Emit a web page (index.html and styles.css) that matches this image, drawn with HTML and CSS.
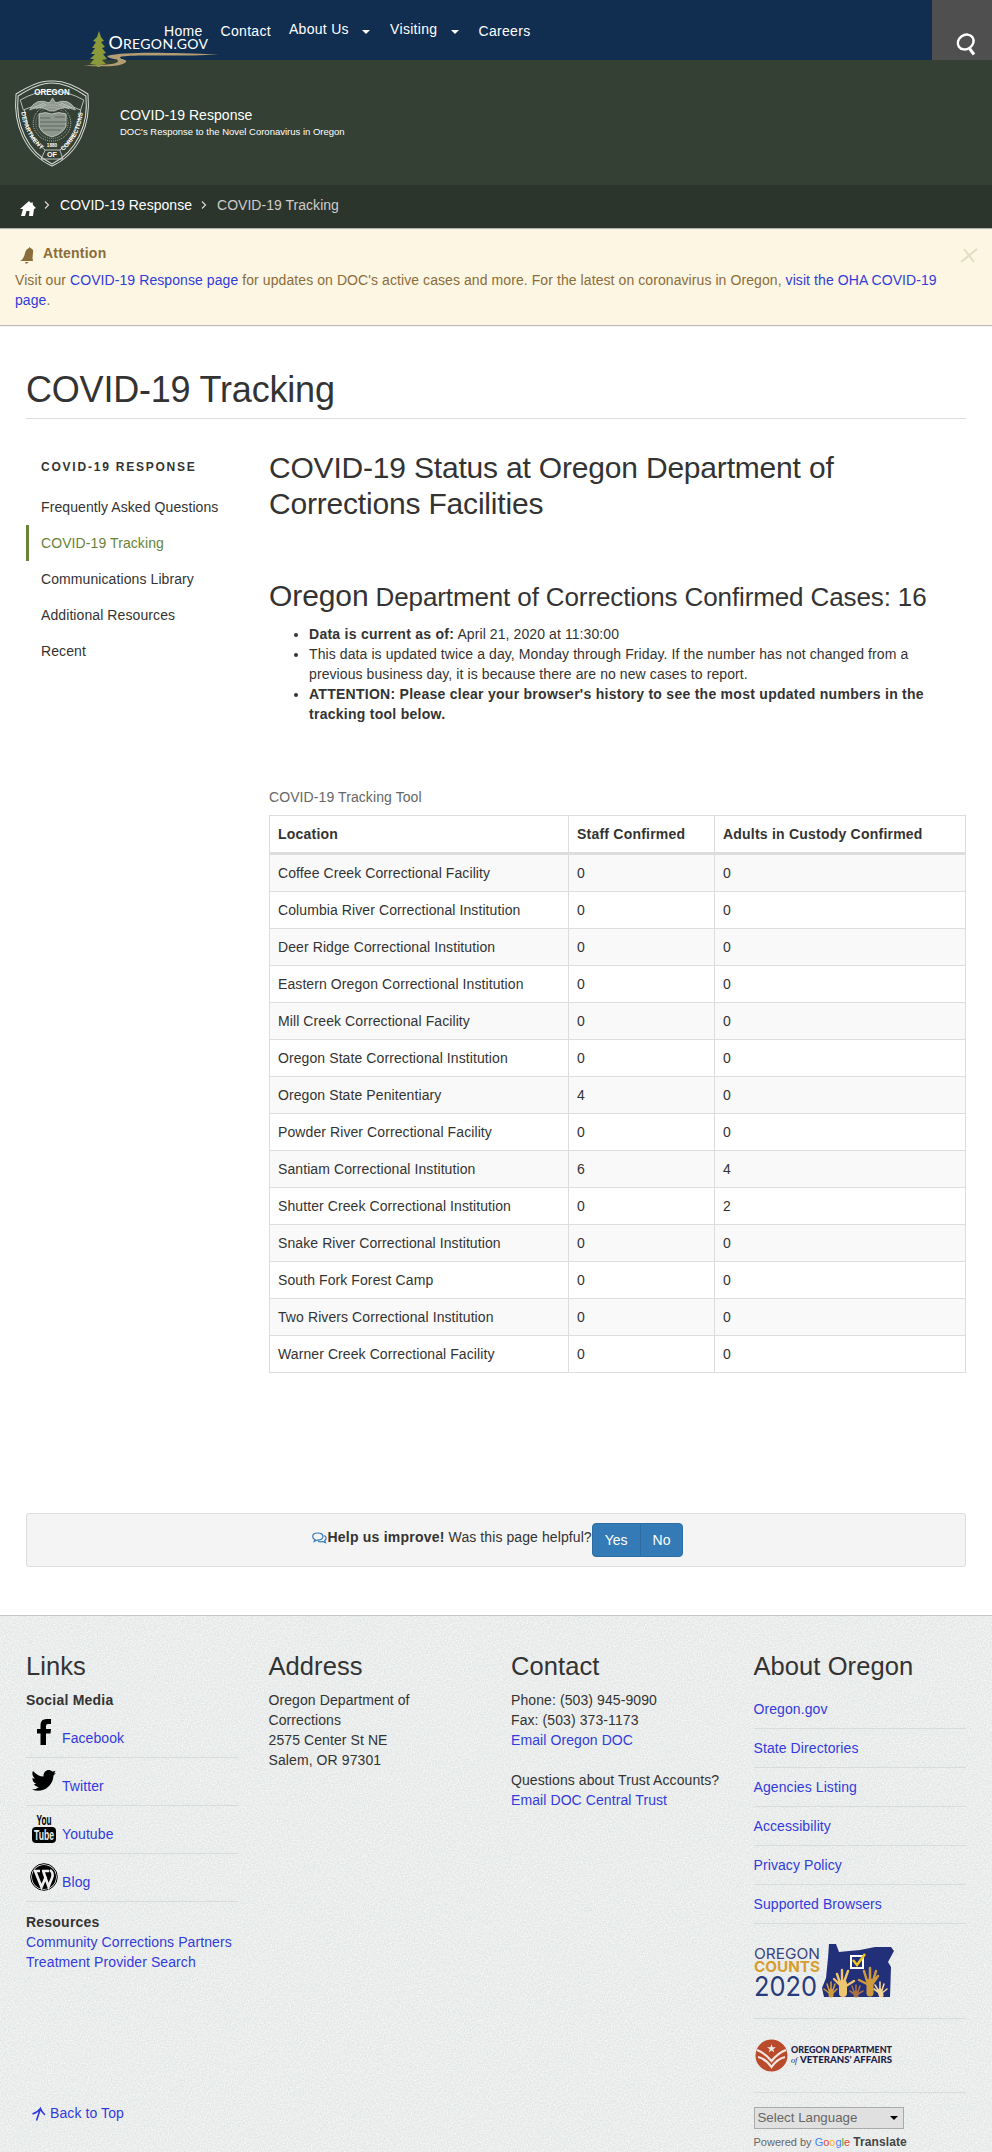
FILE: index.html
```
<!DOCTYPE html>
<html lang="en">
<head>
<meta charset="utf-8">
<title>COVID-19 Tracking</title>
<link rel="stylesheet" href="styles.css">
</head>
<body>
<header class="topbar">
  <svg class="gov-logo" width="138" height="38" viewBox="0 0 138 38">
    <path d="M25 25C45 20 90 22 137 23.500C90 26 50 23 38 26C38 29 46 28 44 31C40 36 20 36 0 34.500C18 34 36 34 36 30C36 27 28 29 25 25Z" fill="#b39d72"/>
    <path d="M17 0L19 6L22 10L19 11L23 16L20 17L24 22L21 23L25 28L20 29L24 33L18 34V36H15V34L8 33L12 28L8 28L13 23L9 23L13 17L10 17L14 11L11 10L15 6Z" fill="#8a9a3b"/>
    <text x="26.500" y="18" class="gov-name" font-size="18">O</text><text x="41" y="18" class="gov-name" font-size="14" textLength="85">REGON.GOV</text>
  </svg>
  <nav class="menu">
    <a>Home</a><a>Contact</a><a class="drop">About Us <i class="caret"></i></a><a class="drop">Visiting <i class="caret"></i></a><a>Careers</a>
  </nav>
  <div class="search"><svg width="20" height="24" viewBox="0 0 20 24" fill="none" stroke="#fff"><ellipse cx="9.700" cy="9" rx="8.300" ry="7" transform="rotate(-35 9.700 9)" stroke-width="2.400"/><path d="M13.500 15.500L18 21.500" stroke-width="3"/></svg></div>
</header>
<section class="agency">
  <svg class="badge" width="74" height="87" viewBox="0 0 71 87" preserveAspectRatio="none" fill="none" stroke="#d5d9d5">
    <path d="M1 14Q22 0 35.500 1Q50 0 70 14C73 45 61 74 35.500 86C10 74-2 45 1 14Z"/>
    <path d="M3 16Q22 3 35.500 3Q50 3 68 16C71 44 59 72 35.500 84C12 72 0 44 3 16Z"/>
    <path d="M5 20Q35 2 66 20L63 30Q36 15 8 30ZM9 30C12 51 18 62 29 70H43C54 62 60 51 63 30M29 70L25 79H46L43 70" stroke-width=".8"/>
    <path d="M14 30Q20 17 33 23L36 18L39 23Q52 17 58 30Q47 25 38 31H33Q25 25 14 30Z" fill="#8d978d" stroke-width=".6"/>
    <path d="M17 28L28 23M20 29L30 24M55 28L44 23M52 29L42 24" stroke-width=".7"/>
    <circle cx="35.500" cy="43" r="18" stroke-width=".8" stroke-dasharray="1 1"/>
    <circle cx="35.500" cy="43" r="15.500" stroke-width=".6" stroke-dasharray="1 1"/>
    <path d="M23 34Q29 31 35 34Q42 31 49 34V46Q46 54 35.500 57Q25 54 23 46Z" fill="#8d978d" stroke-width=".7"/>
    <path d="M24 38H34M38 37H48M24 42H49M24 46H48M27 50H44" stroke="#556155" stroke-width=".8"/>
    <g fill="#fff" stroke="none" font-family="Liberation Sans, sans-serif" font-weight="bold" text-anchor="middle">
      <text x="35.500" y="15.500" font-size="9.500" textLength="34" lengthAdjust="spacingAndGlyphs">OREGON</text>
      <text x="35.500" y="77" font-size="7">OF</text>
      <text x="35.500" y="67" font-size="4.500">1880</text>
    </g>
    <path id="arcL" d="M6 32C8 50 17 64 27 71" stroke="none"/><path id="arcR" d="M46 71C57 62 64 48 65 31" stroke="none"/>
    <g fill="#fff" stroke="none" font-family="Liberation Sans, sans-serif" font-weight="bold" font-size="6"><text textLength="43"><textPath href="#arcL">DEPARTMENT</textPath></text><text textLength="44"><textPath href="#arcR">CORRECTIONS</textPath></text></g>
  </svg>
  <div class="agency-text"><div class="agency-title">COVID-19 Response</div><div class="agency-sub">DOC's Response to the Novel Coronavirus in Oregon</div></div>
</section>
<nav class="crumbs">
  <svg class="house" width="16" height="15" viewBox="0 0 16 15" fill="#fff"><path d="M0 8L9 0L11 2L12.500 1L13 4L16 7L14 8L13 15H9L9.500 10H6.500L5 15H1L3 8Z"/></svg>
  <svg class="chev" width="6" height="8" viewBox="0 0 6 8" fill="none" stroke="#d6d9d6" stroke-width="1.200"><path d="M1 .5L4.500 4L1 7.500"/></svg>
  <a class="crumb1">COVID-19 Response</a>
  <svg class="chev" width="6" height="8" viewBox="0 0 6 8" fill="none" stroke="#d6d9d6" stroke-width="1.200"><path d="M1 .5L4.500 4L1 7.500"/></svg>
  <span class="crumb2">COVID-19 Tracking</span>
</nav>
<section class="alert">
  <div class="alert-head"><svg width="15" height="17" viewBox="0 0 15 17" fill="#8a6d3b"><path d="M9 0L10.500 1Q14 2 13 6L12.500 11L13 14H0Q4 12 5 6Q6 2 9 1ZM5 15H9L6 17Z"/></svg><strong>Attention</strong>
  <svg class="close" width="18" height="15" viewBox="0 0 18 15" fill="none" stroke="#e5dcc3" stroke-width="2"><path d="M4 1L14 14M17 1L1 14"/></svg></div>
  <p>Visit our <a>COVID-19 Response page</a> for updates on DOC's active cases and more. For the latest on coronavirus in Oregon, <a>visit the OHA COVID-19 page</a>.</p>
</section>
<main class="wrap">
  <h1>COVID-19 Tracking</h1>
  <div class="cols">
    <aside class="side"><h2 class="side-title">COVID-19 RESPONSE</h2><a>Frequently Asked Questions</a><a class="active">COVID-19 Tracking</a><a>Communications Library</a><a>Additional Resources</a><a>Recent</a></aside>
    <article class="content">
      <h2>COVID-19 Status at Oregon Department of Corrections Facilities</h2>
      <h3><span class="big">Oregon</span> Department of Corrections Confirmed Cases: 16</h3>
      <ul><li><strong>Data is current as of:</strong> April 21, 2020 at 11:30:00</li><li>This data is updated twice a day, Monday through Friday. If the number has not changed from a previous business day, it is because there are no new cases to report.</li><li><strong>ATTENTION: Please clear your browser's history to see the most updated numbers in the tracking tool below.</strong></li></ul>
      <table>
        <caption>COVID-19 Tracking Tool</caption>
        <colgroup><col class="c1"><col class="c2"><col></colgroup>
        <thead><tr><th>Location</th><th>Staff Confirmed</th><th>Adults in Custody Confirmed</th></tr></thead>
        <tbody>
          <tr><td>Coffee Creek Correctional Facility</td><td>0</td><td>0</td></tr>
          <tr><td>Columbia River Correctional Institution</td><td>0</td><td>0</td></tr>
          <tr><td>Deer Ridge Correctional Institution</td><td>0</td><td>0</td></tr>
          <tr><td>Eastern Oregon Correctional Institution</td><td>0</td><td>0</td></tr>
          <tr><td>Mill Creek Correctional Facility</td><td>0</td><td>0</td></tr>
          <tr><td>Oregon State Correctional Institution</td><td>0</td><td>0</td></tr>
          <tr><td>Oregon State Penitentiary</td><td>4</td><td>0</td></tr>
          <tr><td>Powder River Correctional Facility</td><td>0</td><td>0</td></tr>
          <tr><td>Santiam Correctional Institution</td><td>6</td><td>4</td></tr>
          <tr><td>Shutter Creek Correctional Institution</td><td>0</td><td>2</td></tr>
          <tr><td>Snake River Correctional Institution</td><td>0</td><td>0</td></tr>
          <tr><td>South Fork Forest Camp</td><td>0</td><td>0</td></tr>
          <tr><td>Two Rivers Correctional Institution</td><td>0</td><td>0</td></tr>
          <tr><td>Warner Creek Correctional Facility</td><td>0</td><td>0</td></tr>
        </tbody>
      </table>
    </article>
  </div>
  <div class="helpful">
    <svg width="15" height="13" viewBox="0 0 15 13" fill="none" stroke="#337ab7" stroke-width="1.200"><path d="M5.800 1C2.500 1 .7 2.500 .7 4.500C.7 6 1.700 7 3 7.500L2.200 9.500L5 8C8.500 8.300 11 6.800 11 4.500C11 2.500 9 1 5.800 1Z"/><path d="M12.300 3.500C14.600 4.800 14.800 7 12.700 8.500L13.500 10.700L10.500 9.500C9 10 7.500 9.900 6 9.200"/></svg>
    <span class="ask"><strong>Help us improve!</strong> Was this page helpful?</span><span class="btns"><button>Yes</button><button>No</button></span>
  </div>
</main>
<footer class="footer">
  <svg class="grain" width="100%" height="100%"><filter id="noise" x="0" y="0" width="100%" height="100%"><feTurbulence type="fractalNoise" baseFrequency=".7" numOctaves="2"/><feColorMatrix values="0 0 0 0 1  0 0 0 0 1  0 0 0 0 1  1.200 0 0 0 -.3"/></filter><rect width="100%" height="100%" filter="url(#noise)"/></svg>
  <div class="foot-cols">
    <section>
      <h2>Links</h2><strong class="sub">Social Media</strong>
      <div class="soc"><svg width="36" height="30" viewBox="0 0 36 30"><path d="M25 0V5H22Q20 5 20 7V10H25L24.500 14.500H20V26H14.500V14.500H11V10H14.500V6Q14.500 0 20.500 0Z"/></svg><a>Facebook</a></div>
      <div class="soc"><svg width="36" height="30" viewBox="0 0 36 30"><path d="M30 6L27.500 8.500C27 19 17 27 6 22.500Q10 22.500 13 20Q9 19.500 8 17H10.500Q6 15 6.500 11L9 12Q5 8 7 4Q12 9.500 17.500 9.500C17 3.500 23 1 26.500 4.500L29.500 4L28 6.500Z"/></svg><a>Twitter</a></div>
      <div class="soc"><svg width="36" height="30" viewBox="0 0 36 30"><g font-family="Liberation Sans, sans-serif" font-weight="bold"><text x="10.500" y="9.500" font-size="14" textLength="15" lengthAdjust="spacingAndGlyphs">You</text><rect x="6" y="12" width="24" height="16" rx="4"/><text x="8" y="25" fill="#eee" font-size="14" textLength="20" lengthAdjust="spacingAndGlyphs">Tube</text></g></svg><a>Youtube</a></div>
      <div class="soc"><svg width="36" height="30" viewBox="0 0 36 30"><circle cx="18" cy="14" r="13.300" fill="#eee" stroke="#000"/><circle cx="18" cy="14" r="12"/><path d="M8 8H14M16 8H23M9.500 9L15.500 24L20 13.500M17.500 9L22.500 23.500L26 15Q28 10 24 7" fill="none" stroke="#eee" stroke-width="2.600"/></svg><a>Blog</a></div>
      <div class="res"><strong>Resources</strong><br><a>Community Corrections Partners</a><br><a>Treatment Provider Search</a></div>
    </section>
    <section><h2>Address</h2><p>Oregon Department of Corrections<br>2575 Center St NE<br>Salem, OR 97301</p></section>
    <section><h2>Contact</h2><p>Phone: (503) 945-9090<br>Fax: (503) 373-1173<br><a>Email Oregon DOC</a></p><p class="trust">Questions about Trust Accounts?<br><a>Email DOC Central Trust</a></p></section>
    <section class="about">
      <h2>About Oregon</h2>
      <a>Oregon.gov</a><a>State Directories</a><a>Agencies Listing</a><a>Accessibility</a><a>Privacy Policy</a><a>Supported Browsers</a>
      <div class="counts"><svg width="142" height="56" viewBox="0 0 142 56">
        <g font-family="Inter, sans-serif"><text x="0" y="16" font-size="15" fill="#3a4580" textLength="66" lengthAdjust="spacingAndGlyphs">OREGON</text><text x="0" y="29" font-size="14.500" font-weight="bold" fill="#d69e2e" textLength="66" lengthAdjust="spacingAndGlyphs">COUNTS</text><text x="0" y="53" font-size="27" fill="#283b7c" textLength="63" lengthAdjust="spacingAndGlyphs">2020</text></g>
        <path d="M75 1L82 1L85 9L95 8L106 7L121 4L137 4L140 8L134 19L137 24L136 54H70L68 45L72 35L74 15Z" fill="#22307a"/>
        <path d="M97 13H109V25H97Z" fill="none" stroke="#fff" stroke-width="2"/><path d="M99 17L103 22L111 11" fill="none" stroke="#f2c51c" stroke-width="2.500"/>
        <g stroke-linecap="round" fill="none">
          <g stroke="#edc66f"><path d="M89 50V41" stroke-width="8"/><path d="M86 40L83 31M88 39L88 27M90 39L94 28M92 43L100 38M86 42L80 36" stroke-width="2.400"/></g>
          <g stroke="#cf9a3d"><path d="M116 50V39" stroke-width="7"/><path d="M113 38L110 28M116 37L116 25M119 38L122 28M113 41L105 37M119 40L124 33" stroke-width="2.500"/><path d="M77 52V48" stroke-width="5"/><path d="M75 47L73 41M77 46L77 39M79 47L81 41M75 50L70 46M79 50L83 46" stroke-width="1.600"/></g>
          <g stroke="#a87047"><path d="M102 52V50" stroke-width="5"/><path d="M100 49L98 43M102 48V42M104 49L106 43M100 51L96 48M104 51L109 48" stroke-width="1.600"/></g>
          <g stroke="#f3d596"><path d="M127 52L126 48" stroke-width="5"/><path d="M124 47L121 42M126 46V39M128 47L130 41M124 49L120 46M128 50L133 46" stroke-width="1.600"/></g>
        </g></svg></div>
      <div class="vets"><svg width="142" height="34" viewBox="0 0 142 34"><circle cx="17.500" cy="16.500" r="16" fill="#b94a2c"/><g fill="none" stroke="#f0e8e2" stroke-width="2.200"><path d="M3 11Q11 14 17.500 22Q24 14 32 11M4 18Q12 20 17.500 28Q23 20 31 18"/></g><path d="M17.500 5L18.600 8.300H22L19.300 10.300L20.300 13.500L17.500 11.500L14.700 13.500L15.700 10.300L13 8.300H16.400Z" fill="#f0e8e2"/><g font-family="Lato, sans-serif" font-weight="900" fill="#1b1c49" font-size="8.500"><text x="37" y="13.500" textLength="101" lengthAdjust="spacingAndGlyphs">OREGON DEPARTMENT</text><text x="37" y="24" font-family="Liberation Serif, serif" font-style="italic" font-weight="normal" font-size="8">of</text><text x="46" y="24" textLength="92" lengthAdjust="spacingAndGlyphs">VETERANS’ AFFAIRS</text></g></svg></div>
      <div class="lang"><div class="select">Select Language<i class="caret"></i></div><div class="powered">Powered by <span class="google"><b class="gb">G</b><b class="gr">o</b><b class="gy">o</b><b class="gb">g</b><b class="gg">l</b><b class="gr">e</b></span> <strong>Translate</strong></div></div>
    </section>
  </div>
  <a class="back"><svg width="14" height="14" viewBox="0 0 14 14" fill="none" stroke="#323bdc" stroke-width="1.600"><path d="M4.500 13.500L8.500 1.500M.5 7Q6 5 8.500 1.500Q9.500 5 13 8"/></svg>Back to Top</a>
</footer>
</body>
</html>
```
FILE: styles.css
```
* { box-sizing: border-box; }
body { margin: 0; font: 14px/20px "Liberation Sans", Arial, sans-serif; letter-spacing: .09px; color: #333; background: #fff; }
h1, h2, h3, p, ul { margin: 0; font-weight: normal; }
a { color: #323bdc; text-decoration: none; }
strong, th { letter-spacing: .22px; }
svg { overflow: visible; letter-spacing: 0; flex: none; }
.topbar { height: 60px; background: #112e51; display: flex; justify-content: space-between; position: relative; }
.gov-logo { position: absolute; left: 82px; top: 31px; }
.gov-name { fill: #fff; font-family: Lato, sans-serif; }
.menu { display: flex; padding: 21px 0 0 164px; position: relative; letter-spacing: .3px; }
.menu a { color: #fff; margin-right: 18px; white-space: nowrap; }
.menu .drop { margin-top: -2px; margin-right: 20px; }
.caret { display: inline-block; border: 4px solid transparent; border-top-color: currentColor; border-bottom: 0; margin-left: 9px; }
.search { width: 60px; background: #4f4f4f; padding: 33px 0 0 24px; }
.agency { background: #334033; height: 125px; display: flex; padding: 20px 14px 0 15px; }
.agency-text { margin: 26px 0 0 31px; color: #fff; letter-spacing: 0; }
.agency-title { line-height: 18px; letter-spacing: .05px; }
.agency-sub { font-size: 9.500px; line-height: 16px; }
.crumbs { background: #2c352b; height: 43px; padding-left: 20px; display: flex; align-items: flex-start; color: #fff; letter-spacing: .03px; }
.house { margin: 16px 8px 0 0; }
.chev { margin-top: 16px; }
.crumbs a, .crumbs span { margin: 10px 9px 0 10px; color: #fff; }
.crumbs .crumb2 { color: #ccc; }
.alert { background: #fcf6e2; height: 97px; padding: 15px 14px 0 15px; color: #8a6d3b; box-shadow: 0 1px 1px #bbb, inset 0 2px 1px -1px #aaa; }
.alert-head { display: flex; padding-left: 5px; height: 27px; }
.alert-head svg { margin: 4px 8px 0 0; }
.alert-head .close { margin: 5px 0 0 auto; }
.alert p { width: 940px; letter-spacing: .08px; }
.wrap { padding: 0 26px; height: 1290px; }
h1 { font-size: 36px; line-height: 40px; padding: 45px 0 8px; border-bottom: 1px solid #ddd; letter-spacing: -.2px; }
.cols { display: grid; grid-template-columns: 243px 1fr; }
.side { padding-top: 38px; }
.side a { display: block; color: #333; line-height: 20px; padding: 8px 12px; border-left: 3px solid transparent; }
.side .active { color: #67833a; border-color: #67833a; }
.side-title { font-size: 12px; font-weight: bold; letter-spacing: 1.780px; padding-left: 15px; margin-bottom: 12px; }
.content h2 { font-size: 30px; line-height: 36px; margin-top: 31px; letter-spacing: -.19px; }
.content h3 { font-size: 26px; line-height: 36px; margin-top: 56px; letter-spacing: -.12px; }
.content h3 .big { font-size: 30px; letter-spacing: -.1px; }
.content ul { padding: 0 38px 0 40px; margin-top: 9px; }
.content ul strong { letter-spacing: .27px; }
table { border-collapse: collapse; width: 697px; margin-top: 61px; table-layout: fixed; }
caption { text-align: left; color: #666; padding: 2px 0 8px; }
.c1 { width: 299px; } .c2 { width: 146px; }
th, td { border: 1px solid #ddd; padding: 8px; line-height: 20px; text-align: left; }
th { border-bottom-width: 3px; }
tbody tr:nth-child(odd) { background: #f9f9f9; }
.helpful { margin-top: 140px; height: 54px; background: #f4f4f4; border: 1px solid #ddd; border-radius: 3px; display: flex; justify-content: center; padding: 9px 0 9px 3px; }
.helpful svg { margin: 9px 1px 0 0; }
.ask { margin-top: 4px; }
.btns button { font: inherit; background: #337ab7; color: #fff; border: 1px solid #2e6da4; padding: 6px 12px; height: 34px; border-radius: 0 4px 4px 0; }
.btns button:first-child { border-radius: 4px 0 0 4px; margin-right: -1px; }
.footer { background: #e2e5e5; height: 537px; position: relative; border-top: 1px solid #c4c6c6; overflow: hidden; }
.grain { position: absolute; inset: 0; }
.foot-cols { display: grid; grid-template-columns: repeat(4, 212px); column-gap: 30.500px; padding: 33px 26px 0; position: relative; height: 483px; }
.foot-cols h2 { font-size: 25.500px; line-height: 34px; margin-bottom: 7px; letter-spacing: .08px; }
.sub { display: block; }
.soc { height: 48px; border-bottom: 1px solid #d9dcdc; display: flex; align-items: flex-start; padding-top: 9px; }
.soc a { margin-top: 9px; }
.res { margin-top: 10px; }
.trust { margin-top: 20px; }
.about > a { display: block; line-height: 20px; height: 39px; padding-top: 9px; border-bottom: 1px solid #d9dcdc; }
.counts { height: 95px; padding-top: 19px; border-bottom: 1px solid #d9dcdc; }
.vets { height: 74px; padding: 20px 0 0; border-bottom: 1px solid #d9dcdc; }
.lang { padding-top: 14px; }
.select { width: 150px; height: 22px; border: 1px solid #aaa; background: #e0e0e0; color: #666; letter-spacing: 0; font-size: 13.300px; padding: 0 5px 0 3px; display: flex; justify-content: space-between; align-items: center; }
.select .caret { color: #000; }
.powered { font-size: 11px; color: #666; line-height: 26px; white-space: nowrap; letter-spacing: 0; }
.google { font-size: 11px; } .google b { font-weight: normal; }
.powered strong { font-size: 12px; color: #444; letter-spacing: .1px; }
.gb { color: #4285f4; } .gr { color: #ea4335; } .gy { color: #fbbc05; } .gg { color: #34a853; }
.back { display: flex; position: relative; margin: 4px 0 0 32px; }
.back svg { margin: 4px 4px 0 0; }
```
